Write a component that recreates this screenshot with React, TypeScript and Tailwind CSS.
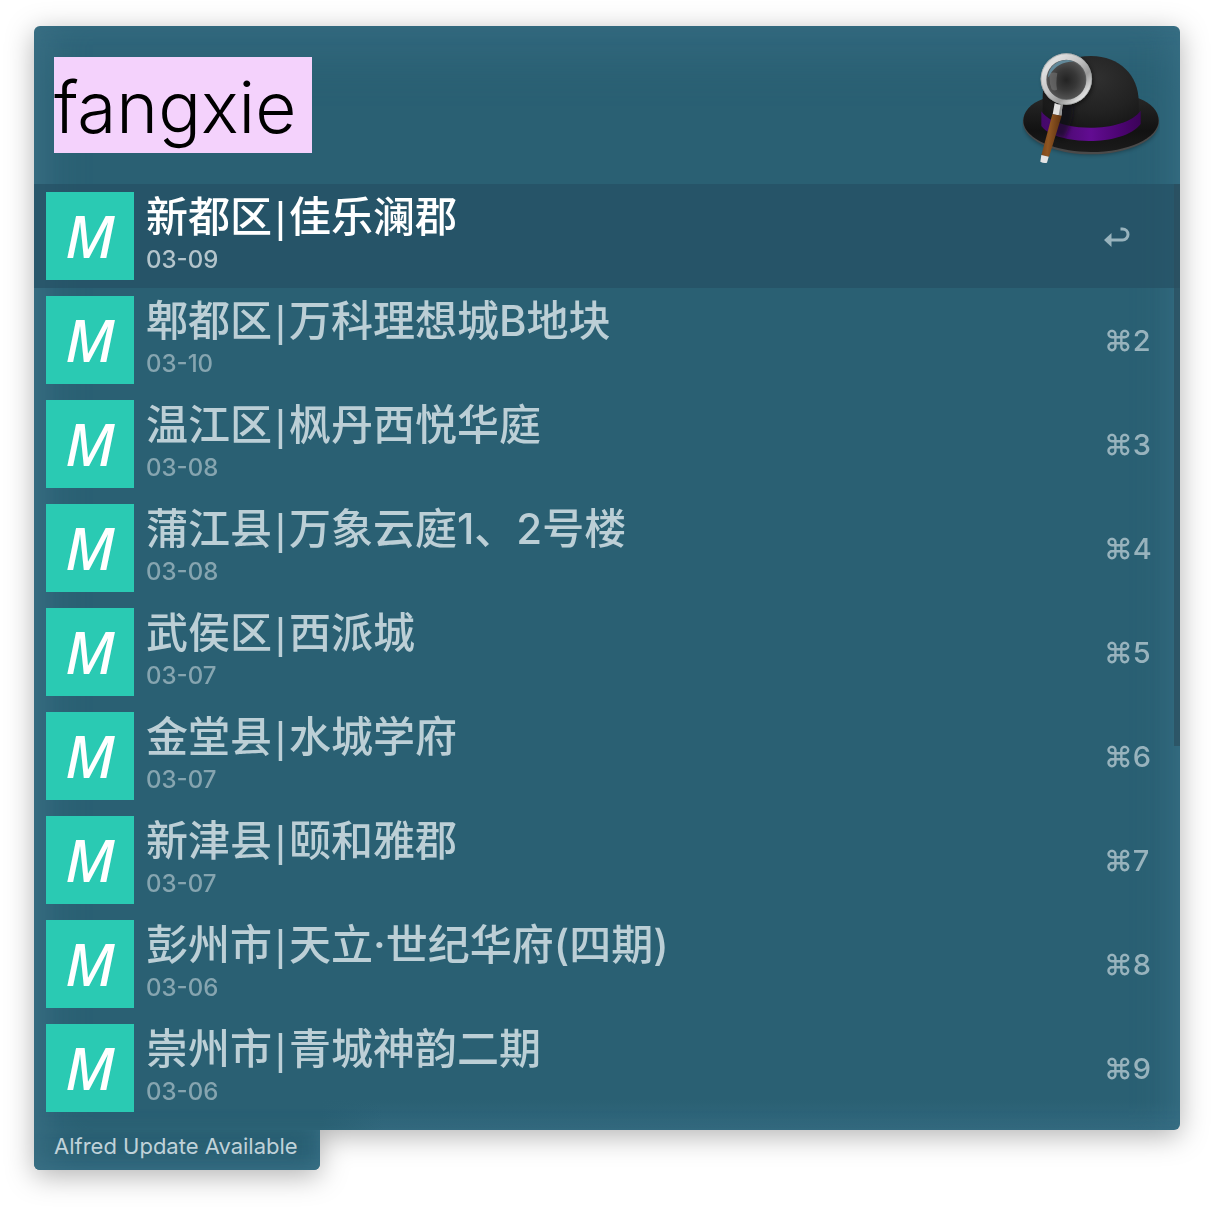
type Result = { area: string; name: string; date: string };

const results: Result[] = [
  { area: "新都区", name: "佳乐澜郡", date: "03-09" },
  { area: "郫都区", name: "万科理想城B地块", date: "03-10" },
  { area: "温江区", name: "枫丹西悦华庭", date: "03-08" },
  { area: "蒲江县", name: "万象云庭1、2号楼", date: "03-08" },
  { area: "武侯区", name: "西派城", date: "03-07" },
  { area: "金堂县", name: "水城学府", date: "03-07" },
  { area: "新津县", name: "颐和雅郡", date: "03-07" },
  { area: "彭州市", name: "天立·世纪华府(四期)", date: "03-06" },
  { area: "崇州市", name: "青城神韵二期", date: "03-06" },
];

function HatLogo() {
  return (
    <svg viewBox="54 48 414 342" className="h-[114px] w-[138px]" role="img" aria-label="Alfred">
      <defs>
        <radialGradient id="crown" cx="0.55" cy="0.3" r="0.75">
          <stop offset="0" stopColor="#303030" />
          <stop offset="0.6" stopColor="#222222" />
          <stop offset="1" stopColor="#151515" />
        </radialGradient>
        <linearGradient id="brim" x1="0" y1="0" x2="0" y2="1">
          <stop offset="0" stopColor="#262626" />
          <stop offset="0.6" stopColor="#121212" />
          <stop offset="1" stopColor="#1b1b1b" />
        </linearGradient>
        <linearGradient id="band" x1="0" y1="0" x2="1" y2="0">
          <stop offset="0" stopColor="#45086a" />
          <stop offset="0.2" stopColor="#4b0a70" />
          <stop offset="0.5" stopColor="#620c92" />
          <stop offset="0.8" stopColor="#4b0470" />
          <stop offset="1" stopColor="#3b0358" />
        </linearGradient>
        <linearGradient id="metal" x1="0" y1="0" x2="1" y2="1">
          <stop offset="0" stopColor="#b4b8b9" />
          <stop offset="0.2" stopColor="#e0e0e0" />
          <stop offset="0.45" stopColor="#c4c4c4" />
          <stop offset="0.65" stopColor="#9a9a9a" />
          <stop offset="0.85" stopColor="#e6e6e6" />
          <stop offset="1" stopColor="#8a8a8a" />
        </linearGradient>
        <radialGradient id="glass" cx="0.5" cy="0.5" r="0.55">
          <stop offset="0" stopColor="#232323" />
          <stop offset="0.5" stopColor="#383838" />
          <stop offset="1" stopColor="#585858" />
        </radialGradient>
        <linearGradient id="wood" x1="0" y1="0" x2="1" y2="0.2">
          <stop offset="0" stopColor="#6e3d14" />
          <stop offset="0.45" stopColor="#8f5622" />
          <stop offset="1" stopColor="#5e3210" />
        </linearGradient>
        <filter id="soft" x="-30%" y="-30%" width="160%" height="160%">
          <feGaussianBlur stdDeviation="6" />
        </filter>
      </defs>
      <ellipse cx="261" cy="274" rx="200" ry="88" fill="#000" opacity="0.35" filter="url(#soft)" />
      <path d="M118 196C80 210 57 236 57 264c0 54 94 97 204 97s204-43 204-97c0-30-24-56-62-70Z" fill="#4a4a4a" />
      <path d="M118 194C80 208 58 232 58 260c0 52 92 94 203 94s203-42 203-94c0-28-22-52-60-67Z" fill="url(#brim)" />
      <path d="M116 250V190C116 118 172 66 262 66c84 0 142 58 142 136v40c-40 58-240 62-288 8Z" fill="url(#crown)" />
      <path d="M112 232c44 66 250 66 298-2v40c-50 68-254 66-298 6Z" fill="url(#band)" />
      <path d="M166 210l42-2c4 40-14 80-28 106l-42-14Z" fill="#100812" opacity="0.6" filter="url(#soft)" />
      <circle cx="192" cy="141" r="76" fill="#000" opacity="0.5" filter="url(#soft)" />
      <circle cx="187" cy="135" r="77" fill="url(#metal)" />
      <circle cx="187" cy="135" r="76" fill="none" stroke="#9a9e9f" strokeWidth="2" />
      <circle cx="187" cy="137" r="60" fill="#5e6061" />
      <circle cx="187" cy="138" r="58" fill="url(#glass)" />
      <path d="M132 128c2-28 26-51 60-50l18 4c-40 2-60 18-77 48Z" fill="#62899a" />
      <path d="M137 119q12-6 23-1-5 26-1 49-9 5-16-1-9-22-6-47Z" fill="#7a7a7a" opacity="0.55" />
      <path d="M152 207q12 6 24 4l-4 34-26-4Z" fill="#e1e1e1" />
      <path d="M170 211l6 0-4 34-8-1Z" fill="#929292" />
      <path d="M145 241l28 4-38 124-23-5Z" fill="url(#wood)" />
      <path d="M112 363l22 5-5 18q-10 3-20-3Z" fill="#e4e4e4" />
    </svg>
  );
}

function ReturnIcon() {
  return (
    <svg viewBox="0 0 26 20" className="h-5 w-[26px]" role="img" aria-label="Return">
      <path d="M0 13 7.500 6v14Z" fill="currentColor" />
      <path d="M7 13h11.500a5.500 5.500 0 0 0 0-11h-2" fill="none" stroke="currentColor" strokeWidth="3" />
    </svg>
  );
}

function ResultRow({ result, index }: { result: Result; index: number }) {
  const selected = index === 0;
  return (
    <li className={selected ? "bg-[#255064]/70" : ""}>
      <button type="button" className="flex h-[104px] w-full items-center gap-3 pl-3 text-left font-medium">
        <span
          aria-hidden="true"
          className="flex size-[88px] shrink-0 items-center justify-center bg-[#2acab3] font-['Noto_Sans','Open_Sans'] text-[58px] leading-none font-medium text-white italic"
        >
          M
        </span>
        <span className="flex min-w-0 flex-1 flex-col pb-1.5">
          <span className={selected ? "truncate text-[42px] leading-[52px] text-white" : "truncate text-[42px] leading-[52px] text-[#bccfd6]"}>
            {result.area}
            <span className="px-[3px] font-['Liberation_Sans']">|</span>
            {result.name}
          </span>
          <span className={selected ? "text-[24px] leading-8 text-[#b4c5cc]" : "text-[24px] leading-8 text-[#86a5b0]"}>
            {result.date}
          </span>
        </span>
        <span className="w-[76px] shrink-0 pt-0.5 text-[29px] leading-9 text-[#98b3bd]">
          {selected ? <ReturnIcon /> : `⌘${index + 1}`}
        </span>
      </button>
    </li>
  );
}

export default function App() {
  return (
    <main className="min-h-screen bg-white px-[34px] py-[26px] font-['Inter','Noto_Sans_CJK_SC',sans-serif]">
      <div className="drop-shadow-[0_6px_14px_rgba(0,0,0,0.3)]">
        <section className="relative rounded-md rounded-bl-none bg-[#2a6073] bg-[linear-gradient(to_right,#2a6073_286px,transparent_350px),linear-gradient(to_top,#33697e,transparent)] bg-[length:100%_30px] bg-bottom bg-no-repeat pb-[10px] shadow-[inset_40px_0_40px_-30px_#3b7085,inset_-30px_0_40px_-28px_#3a7288,inset_0_50px_50px_-30px_#356b80]">
          <header className="flex h-[158px] items-start justify-between pr-5 pl-5">
            <input
              aria-label="Search"
              defaultValue="fangxie"
              className="mt-[31px] h-24 w-[258px] bg-[#f4d2fc] pt-1 text-[71px] font-light text-black outline-none"
            />
            <div className="mt-6">
              <HatLogo />
            </div>
          </header>
          <ul>
            {results.map((result, index) => (
              <ResultRow key={result.area + result.name} result={result} index={index} />
            ))}
          </ul>
          <div className="absolute top-[158px] right-0 h-[562px] w-[6px] bg-[#2b4e5e]/70" />
        </section>
        <a
          href="#update"
          className="flex h-10 w-[286px] items-center rounded-b-md bg-[#2a6073] pb-2 pl-5 text-[22px] text-[#c0d2d9] shadow-[inset_40px_0_40px_-30px_#3b7085,inset_-20px_0_24px_-20px_#3a7288,inset_0_-24px_24px_-20px_#3a7288]"
        >
          Alfred Update Available
        </a>
      </div>
    </main>
  );
}
